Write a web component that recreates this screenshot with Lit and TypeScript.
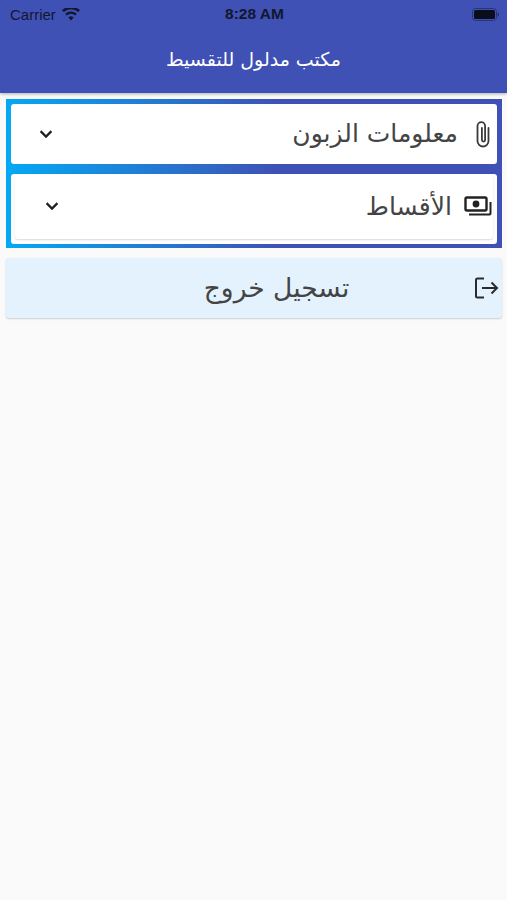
import { LitElement, html, css } from "lit";
import { customElement } from "lit/decorators.js";

const chevron = html`<svg class="chev" viewBox="0 0 24 24" width="24" height="24"><path d="M7.41 8.59 12 13.17l4.59-4.58L18 10l-6 6-6-6z" fill="#1f1f1f" stroke="#1f1f1f" stroke-width=".4"/></svg>`;

@customElement("app-root")
export class AppRoot extends LitElement {
  static styles = css`
    :host { display: block; width: 507px; height: 900px; background: #fafafa; overflow: hidden; font-family: "DejaVu Sans", sans-serif; }
    * { box-sizing: border-box; }
    .bar { height: 93px; background: #3f51b5; box-shadow: 0 1px 3px rgba(0,0,0,.3); display: flex; flex-direction: column; position: relative; }
    .status { height: 28px; display: grid; grid-template-columns: 1fr auto 1fr; align-items: center; padding: 0 8px 0 10px; color: #12172e; font: 15px "Liberation Sans", sans-serif; }
    .left { display: flex; align-items: center; gap: 6px; }
    .time { font-weight: 600; font-size: 15.5px; }
    .right { display: flex; justify-content: flex-end; }
    .title { flex: 1; display: flex; align-items: center; justify-content: center; color: #fff; font-size: 19px; padding-bottom: 3px; }
    .panel { margin: 6px 5px 0 6px; padding: 4.5px 5px; display: flex; flex-direction: column; gap: 10px; background: linear-gradient(90deg, #03a9f4 0%, #3f51b5 55%, #3f51b5 100%); }
    .card { background: #fff; border-radius: 3px; display: flex; align-items: center; }
    .c1 { height: 60px; padding: 0 6px 0 23px; }
    .c2 { height: 70px; padding: 0 4px 5px 4px; }
    .inner { flex: 1; align-self: stretch; display: flex; align-items: center; padding: 0 1px 0 25px; border-radius: 3px; box-shadow: 0 1px 2px rgba(0,0,0,.16); }
    .label { flex: 1; text-align: right; font-size: 25px; color: #444; }
    .ic { flex: none; display: block; }
    .clip { margin-left: 17px; }
    .cash { margin-left: 12px; }
    .chev { flex: none; display: block; }
    .logout { margin: 10px 5px 0 6px; height: 60px; background: #e3f2fd; border-radius: 3px; box-shadow: 0 1px 2px rgba(0,0,0,.18); display: flex; align-items: center; padding: 0 2px 0 0; }
    .logout .txt { flex: 1; text-align: center; font-size: 26.5px; color: #444; padding: 0 0 2px 73px; }
    .logout svg { flex: none; margin-right: 1px; display: block; }
  `;
  render() {
    return html`
      <div class="bar">
        <div class="status">
          <div class="left"><span>Carrier</span>
            <svg width="18" height="13" viewBox="0 0 18 13"><path d="M9 12.5 6.4 9.4a4 4 0 0 1 5.2 0zM4.8 7.6 3.2 5.7a9 9 0 0 1 11.6 0l-1.6 1.9a6.6 6.6 0 0 0-8.400 0zM1.700 4 0 2a14 14 0 0 1 18 0l-1.700 2a11.400 11.400 0 0 0-14.600 0z" fill="#12172e"/></svg>
          </div>
          <div class="time">8:28 AM</div>
          <div class="right"><svg width="27" height="13" viewBox="0 0 27 13"><rect x=".5" y=".5" width="24" height="12" rx="3" fill="none" stroke="#2a3570"/><rect x="2" y="2" width="21" height="9" rx="1.500" fill="#0a0d1c"/><rect x="25.500" y="4.500" width="1.500" height="4" rx=".7" fill="#2a3570"/></svg></div>
        </div>
        <div class="title" dir="rtl">مكتب مدلول للتقسيط</div>
      </div>
      <div class="panel">
        <div class="card c1">
          ${chevron}
          <div class="label" dir="rtl">معلومات الزبون</div>
          <svg class="ic clip" width="16" height="28" viewBox="0 0 16 28"><path d="M13.500 8v13a5.500 5.500 0 0 1-11 0V6a3.800 3.800 0 0 1 7.600 0v14a1.600 1.600 0 0 1-3.200 0V8" fill="none" stroke="#3a3a3a" stroke-width="1.800" stroke-linecap="round"/></svg>
        </div>
        <div class="card c2">
          <div class="inner">
            ${chevron}
            <div class="label" dir="rtl">الأقساط</div>
            <svg class="ic cash" width="28" height="20" viewBox="0 0 28 20"><rect x="1.500" y="1.500" width="21" height="13" rx="1.500" fill="none" stroke="#222" stroke-width="2.400"/><circle cx="12" cy="8" r="3.400" fill="#222"/><path d="M26.500 6v11.500a1 1 0 0 1-1 1H5" fill="none" stroke="#222" stroke-width="2"/></svg>
          </div>
        </div>
      </div>
      <div class="logout">
        <div class="txt" dir="rtl">تسجيل خروج</div>
        <svg width="25" height="24" viewBox="0 0 25 24"><path d="M10 2.500H3.500A1.500 1.500 0 0 0 2 4v16a1.500 1.500 0 0 0 1.500 1.500H10" fill="none" stroke="#2b2b2b" stroke-width="2"/><path d="M8 12h15M17.500 6.500 23 12l-5.500 5.500" fill="none" stroke="#2b2b2b" stroke-width="2"/></svg>
      </div>
    `;
  }
}
